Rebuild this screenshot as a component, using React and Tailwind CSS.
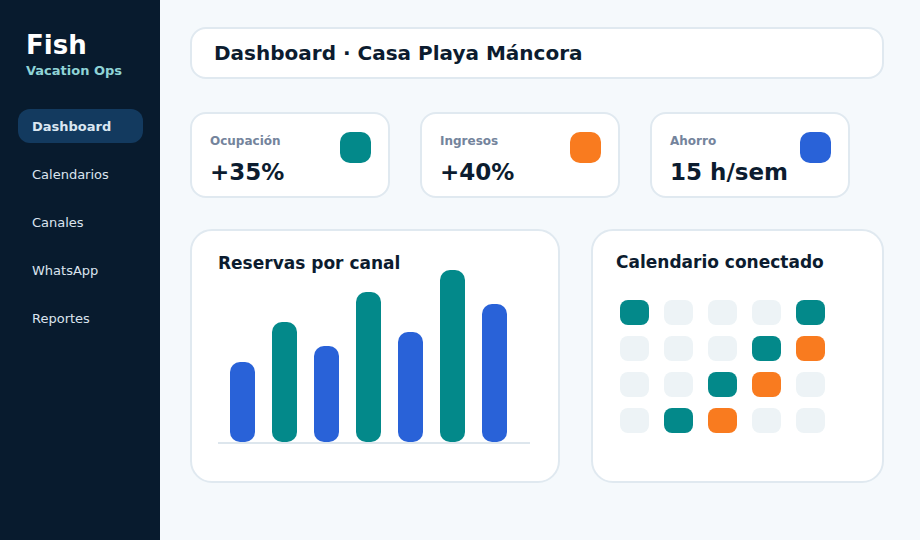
const nav = ['Dashboard', 'Calendarios', 'Canales', 'WhatsApp', 'Reportes'];

const stats = [
  { label: 'Ocupación', value: '+35%', dot: 'bg-[#03898a]' },
  { label: 'Ingresos', value: '+40%', dot: 'bg-[#f97b1f]' },
  { label: 'Ahorro', value: '15 h/sem', dot: 'bg-[#2962d8]' },
];

// bar heights in px, alternating blue / teal
const bars = [
  { h: 80, c: 'bg-[#2962d8]' },
  { h: 120, c: 'bg-[#03898a]' },
  { h: 96, c: 'bg-[#2962d8]' },
  { h: 150, c: 'bg-[#03898a]' },
  { h: 110, c: 'bg-[#2962d8]' },
  { h: 172, c: 'bg-[#03898a]' },
  { h: 138, c: 'bg-[#2962d8]' },
];

// t = teal, o = orange, e = empty
const days = [
  't', 'e', 'e', 'e', 't',
  'e', 'e', 'e', 't', 'o',
  'e', 'e', 't', 'o', 'e',
  'e', 't', 'o', 'e', 'e',
];

const dayColor = {
  t: 'bg-[#03898a]',
  o: 'bg-[#f97b1f]',
  e: 'bg-[#edf3f6]',
};

export default function App() {
  return (
    <div className="flex h-screen w-full bg-[#f5f9fc] font-['DejaVu_Sans',sans-serif]">
      <aside className="w-[160px] shrink-0 bg-[#081b2e] pt-[29px]">
        <div className="px-[26px]">
          <div className="text-[26px] leading-[32px] font-bold text-white">Fish</div>
          <div className="mt-[2px] text-[13px] leading-[16px] font-bold text-[#8fd3d6]">Vacation Ops</div>
        </div>
        <nav className="mt-[30px] px-[18px] flex flex-col gap-[14px]">
          {nav.map((item, i) => (
            <div
              key={item}
              className={`h-[34px] w-[125px] flex items-center pl-[14px] pt-[2px] rounded-[12px] text-[13px] ${
                i === 0 ? 'bg-[#133a5f] font-bold text-[#dbe7f2]' : 'text-[#dbe4ee]'
              }`}
            >
              {item}
            </div>
          ))}
        </nav>
      </aside>

      <main className="flex-1 pl-[30px] pr-[36px] pt-[27px]">
        <div className="h-[52px] flex items-center px-[22px] bg-white border-2 border-[#e0e9f0] rounded-[16px]">
          <h1 className="text-[20px] font-bold text-[#0c1c2f]">Dashboard · Casa Playa Máncora</h1>
        </div>

        <div className="mt-[33px] flex gap-[30px]">
          {stats.map(s => (
            <div
              key={s.label}
              className="w-[200px] h-[86px] bg-white border-2 border-[#e0e9f0] rounded-[16px] pl-[18px] pr-[17px] pt-[19px] flex justify-between"
            >
              <div>
                <div className="text-[12px] leading-[16px] font-bold text-[#74849c]">{s.label}</div>
                <div className="mt-[9px] text-[23px] leading-[29px] font-bold text-[#0c1c2f]">{s.value}</div>
              </div>
              <div className={`-mt-[1px] w-[31px] h-[31px] rounded-[10px] ${s.dot}`} />
            </div>
          ))}
        </div>

        <div className="mt-[31px] flex gap-[31px]">
          <section className="w-[370px] h-[254px] bg-white border-2 border-[#e0e9f0] rounded-[22px] pl-[26px] pt-[22px]">
            <h2 className="h-[20px] leading-[20px] text-[17px] font-bold text-[#0c1c2f]">Reservas por canal</h2>
            <div className="w-[312px] h-[171px] border-b-2 border-[#dde6ed] pl-[12px] flex items-end gap-[17px]">
              {bars.map((b, i) => (
                <div key={i} className={`w-[25px] shrink-0 rounded-[10px] ${b.c}`} style={{ height: b.h }} />
              ))}
            </div>
          </section>

          <section className="w-[293px] h-[254px] bg-white border-2 border-[#e0e9f0] rounded-[22px] pl-[23px] pt-[21px]">
            <h2 className="h-[20px] leading-[20px] text-[17px] font-bold text-[#0c1c2f]">Calendario conectado</h2>
            <div className="mt-[28px] ml-[4px] grid grid-cols-[repeat(5,29px)] gap-x-[15px] gap-y-[11px]">
              {days.map((d, i) => (
                <div key={i} className={`h-[25px] rounded-[8px] ${dayColor[d]}`} />
              ))}
            </div>
          </section>
        </div>
      </main>
    </div>
  );
}
